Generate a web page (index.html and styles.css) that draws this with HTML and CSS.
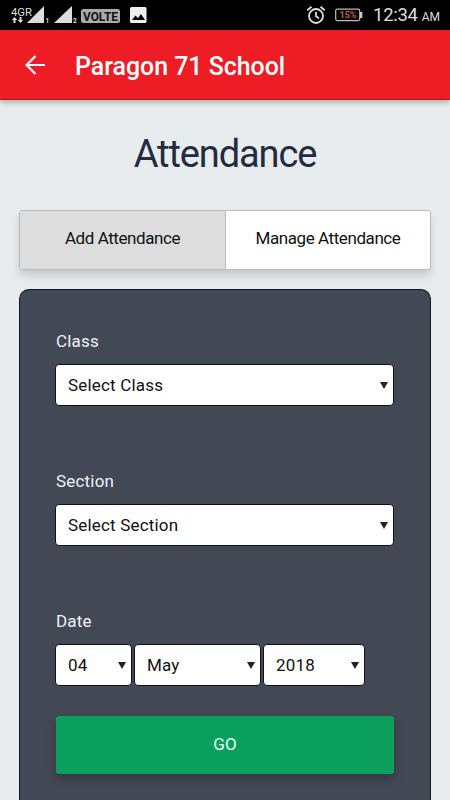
FILE: index.html
```html
<!DOCTYPE html>
<html lang="en">
<head>
<meta charset="utf-8">
<title>Attendance</title>
<link rel="stylesheet" href="styles.css">
</head>
<body>
<div class="status-bar">
  <svg class="status-icons" width="150" height="30" viewBox="0 0 150 30">
    <text class="network" x="11" y="16" textLength="21" lengthAdjust="spacingAndGlyphs">4GR</text>
    <path fill="#ddd" d="M14.500 17l2.700 3h-1.700v3h-2v-3h-1.700zM20.500 23l-2.700-3h1.700v-3h2v3h1.700z"/>
    <path fill="#ddd" d="M44 6v17H27zM72 6v17H54z"/>
    <text class="sim" x="45.500" y="23">1</text>
    <text class="sim" x="73" y="23">2</text>
    <rect x="81" y="9" width="39" height="14" rx="2.500" fill="#aaa"/>
    <text class="volte" x="83" y="20.500" textLength="35" lengthAdjust="spacingAndGlyphs">VOLTE</text>
    <rect x="130" y="7" width="16.500" height="16" rx="1.500" fill="#eee"/>
    <path d="M132 20l3.500-4.500 2.500 2.500 3-4 4 6z" fill="#000"/>
  </svg>
  <div class="status-right">
    <svg width="20" height="20" viewBox="0 0 20 20" fill="none" stroke="#ddd" stroke-width="1.800">
      <circle cx="10" cy="11" r="7"/><path d="M10 7v4.300l3 2M1.300 5.300L5.500 1.700M18.700 5.300l-4.200-3.600"/>
    </svg>
    <svg class="battery" width="28" height="14" viewBox="0 0 28 14">
      <rect x=".7" y="1.200" width="24" height="11.400" rx="1.500" fill="none" stroke="#bbb" stroke-width="1.200"/>
      <path d="M25 4h2.300v6H25z" fill="#ccc"/>
      <text class="charge" x="4.500" y="10.400" textLength="17" lengthAdjust="spacingAndGlyphs">15%</text>
    </svg>
    <div class="clock"><span class="time">12:34</span><span class="meridiem">AM</span></div>
  </div>
</div>
<header class="app-bar">
  <svg class="back" width="20" height="20" viewBox="0 0 20 20" fill="none" stroke="#fff" stroke-width="2.200"><path d="M20 10H2M10.500 1L1.600 10l8.900 9"/></svg>
  <div class="app-title">Paragon 71 School</div>
</header>
<main>
  <h1>Attendance</h1>
  <nav class="tabs">
    <div class="tab active">Add Attendance</div>
    <div class="tab">Manage Attendance</div>
  </nav>
  <form class="card">
    <div class="field">
      <label>Class</label>
      <div class="row"><div class="select full">Select Class<i class="caret"></i></div></div>
    </div>
    <div class="field">
      <label>Section</label>
      <div class="row"><div class="select full">Select Section<i class="caret"></i></div></div>
    </div>
    <div class="field date">
      <label>Date</label>
      <div class="row">
        <div class="select day">04<i class="caret"></i></div>
        <div class="select month">May<i class="caret"></i></div>
        <div class="select year">2018<i class="caret"></i></div>
      </div>
    </div>
    <button type="button" class="go">GO</button>
  </form>
</main>
</body>
</html>
```
FILE: styles.css
```css
* { box-sizing: border-box; }
body {
  margin: 0;
  height: 800px;
  overflow: hidden;
  background: #e8ecef;
  font-family: Roboto, "Liberation Sans", sans-serif;
  font-size: 17px;
  color: #111;
}
.status-bar {
  height: 30px;
  background: #000;
  display: flex;
  justify-content: space-between;
}
.status-icons { display: block; }
.network { font-size: 11px; fill: #ddd; }
.sim { font-size: 6.5px; font-weight: 700; fill: #ddd; }
.volte { font-size: 12px; font-weight: 700; fill: #111; }
.charge { font-size: 9px; font-weight: 700; fill: #c8604a; }
.status-right {
  display: flex;
  align-items: center;
  padding-right: 10px;
  color: #ddd;
}
.battery { margin: 0 10px 0 9px; }
.clock {
  display: flex;
  align-items: baseline;
  gap: 4px;
  line-height: 30px;
  padding-top: 2px;
  white-space: nowrap;
}
.time { font-size: 18.500px; letter-spacing: -.3px; }
.meridiem { font-size: 12px; }
.app-bar {
  position: relative;
  height: 70px;
  padding: 1px 25px 0;
  background: #ee1d25;
  border-bottom: 1px solid #b5161c;
  box-shadow: 0 2px 6px rgba(0, 0, 0, .3);
  display: flex;
  align-items: center;
  color: #fff;
}
.app-title { margin-left: 30px; padding-top: 2px; font-size: 24.900px; font-weight: 500; white-space: nowrap; }
main { padding: 0 19px; }
h1 {
  margin: 0;
  height: 110px;
  line-height: 108px;
  text-align: center;
  font-size: 38px;
  font-weight: 400;
  letter-spacing: -1.1px;
  color: #222c40;
}
.tabs {
  display: flex;
  height: 60px;
  border: 1px solid #bbb;
  border-radius: 3px;
  background: #fff;
  box-shadow: 0 6px 8px rgba(0, 0, 0, .14);
  overflow: hidden;
}
.tab { flex: 1; text-align: center; line-height: 54px; letter-spacing: -.43px; white-space: nowrap; }
.tab.active { background: #ddd; border-right: 1px solid #bbb; flex: 0 0 206px; }
.card {
  margin-top: 19px;
  height: 511px;
  padding: 39px 36px 0 35px;
  border: 1px solid #0b1730;
  border-bottom: 0;
  border-radius: 10px 10px 0 0;
  background: #434855;
}
.field { height: 140px; }
.field label { display: block; height: 35px; line-height: 24px; padding-left: 1px; letter-spacing: .2px; color: #eef1f8; }
.row { display: flex; gap: 2px; }
.select {
  height: 42px;
  padding: 0 5px 0 12px;
  border: 1px solid #0b0f20;
  border-radius: 4px;
  background: #fff;
  display: flex;
  align-items: center;
  justify-content: space-between;
  letter-spacing: .18px;
}
.full { width: 340px; }
.day { width: 77px; }
.month { width: 127px; }
.year { width: 102px; }
.caret {
  border: 4px solid transparent;
  border-top: 7px solid #222;
  border-bottom: 0;
}
.date { height: 107px; }
.go {
  display: block;
  width: 338px;
  height: 58px;
  margin: 0 0 0 1px;
  padding: 0 0 3px;
  border: 0;
  border-radius: 3px;
  background: #0ca05f;
  box-shadow: 0 5px 10px rgba(0, 0, 0, .25);
  color: #eafff5;
  font: inherit;
}
```
